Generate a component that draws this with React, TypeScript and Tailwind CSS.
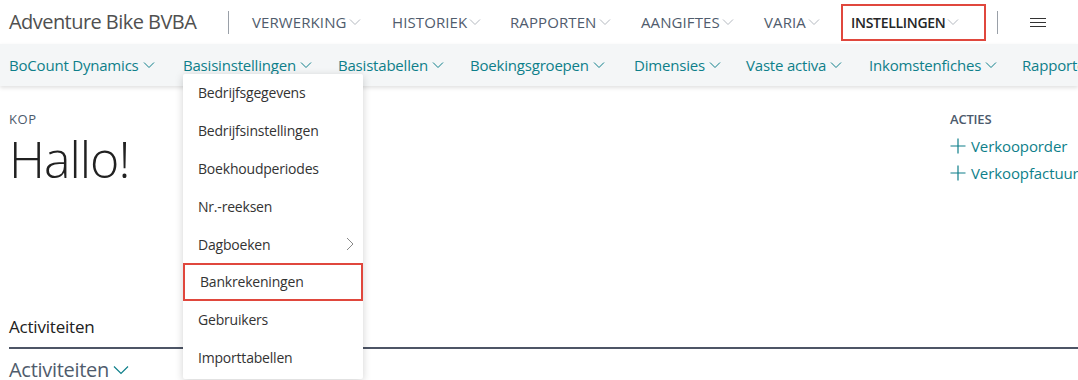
const font = { fontFamily: '"Open Sans", "Noto Sans", sans-serif' };

const topItems = [
  { label: 'VERWERKING', w: 'w-[140px]' },
  { label: 'HISTORIEK', w: 'w-[118px]' },
  { label: 'RAPPORTEN', w: 'w-[131px]' },
  { label: 'AANGIFTES', w: 'w-[123px]' },
  { label: 'VARIA', w: 'w-[77px]' },
];

const subItems = [
  { label: 'BoCount Dynamics', w: 'w-[174px]' },
  { label: 'Basisinstellingen', w: 'w-[155px]' },
  { label: 'Basistabellen', w: 'w-[132px]' },
  { label: 'Boekingsgroepen', w: 'w-[164px]' },
  { label: 'Dimensies', w: 'w-[112px]' },
  { label: 'Vaste activa', w: 'w-[123px]' },
  { label: 'Inkomstenfiches', w: 'w-[153px]' },
  { label: 'Rapporten', w: 'w-[100px]' },
];

const menuItems = [
  'Bedrijfsgegevens',
  'Bedrijfsinstellingen',
  'Boekhoudperiodes',
  'Nr.-reeksen',
  'Dagboeken',
  'Bankrekeningen',
  'Gebruikers',
  'Importtabellen',
];

function Chevron({ className }: { className?: string }) {
  return (
    <svg width="12" height="8" viewBox="0 0 12 8" className={className}>
      <polyline points="1,1.5 6,6.5 11,1.5" fill="none" stroke="currentColor" strokeWidth="1" />
    </svg>
  );
}

function Plus() {
  return (
    <svg width="16" height="16" viewBox="0 0 16 16" className="shrink-0">
      <path d="M8 0.5V15.5M0.5 8H15.5" stroke="#0e7f8a" strokeWidth="1.2" fill="none" />
    </svg>
  );
}

export default function App() {
  return (
    <div className="relative w-[1078px] h-[380px] overflow-hidden bg-white" style={font}>
      {/* Top bar */}
      <div className="flex items-center h-[44px] pl-[9px]">
        <div className="text-[20px] text-[#505050] w-[219px] whitespace-nowrap tracking-[-0.55px]">Adventure Bike BVBA</div>
        <div className="w-px h-[23px] bg-[#9aa0a8]" />
        <div className="flex items-center pl-[23px]">
          {topItems.map((it) => (
            <div key={it.label} className={`${it.w} flex items-center gap-[2px] text-[15px] text-[#505c6d] whitespace-nowrap tracking-[0.1px]`}>
              {it.label}
              <Chevron className="text-[#b4b9c0]" />
            </div>
          ))}
          <div className="flex items-center gap-[2px] w-[145px] h-[37px] pl-[8px] border-2 border-[#e0473d] text-[14px] font-semibold text-[#262626] whitespace-nowrap tracking-[-0.3px]">
            INSTELLINGEN
            <Chevron className="text-[#b4b9c0]" />
          </div>
          <div className="w-px h-[23px] bg-[#9aa0a8] ml-[11px]" />
          <div className="ml-[32px] flex flex-col gap-[3px]">
            <div className="w-[16px] h-px bg-[#333]" />
            <div className="w-[16px] h-px bg-[#333]" />
            <div className="w-[16px] h-px bg-[#333]" />
          </div>
        </div>
      </div>

      {/* Sub bar */}
      <div className="flex items-center h-[42px] pl-[9px] bg-[#f4f6f7] shadow-[0_2px_4px_rgba(0,0,0,0.12)] relative">
        {subItems.map((it) => (
          <div key={it.label} className={`${it.w} shrink-0 flex items-center gap-[4px] text-[15px] text-[#0e7f8a] whitespace-nowrap tracking-[-0.2px]`}>
            {it.label}
            <Chevron />
          </div>
        ))}
      </div>

      {/* Content */}
      <div className="flex pl-[9px] pt-[23px]">
        <div className="flex-1 flex flex-col">
          <div className="text-[13px] text-[#4c5a6c] tracking-[0.6px] leading-[20px]">KOP</div>
          <div className="text-[50px] font-light text-[#212121] leading-[52px] mt-[4px] mb-[4px] tracking-[-1px]">Hallo!</div>
        </div>
        <div className="w-[128px] flex flex-col">
          <div className="text-[13px] font-semibold text-[#4c5a6c] leading-[20px] tracking-[-0.2px]">ACTIES</div>
          <div className="flex items-center gap-[5px] text-[15px] text-[#0e7f8a] mt-[7px] whitespace-nowrap leading-[20px] tracking-[-0.1px]">
            <Plus />Verkooporder
          </div>
          <div className="flex items-center gap-[5px] text-[15px] text-[#0e7f8a] mt-[7px] whitespace-nowrap leading-[20px] tracking-[-0.1px]">
            <Plus />Verkoopfactuur
          </div>
        </div>
      </div>

      <div className="pl-[9px] mt-[126px]">
        <div className="text-[17px] text-[#212121] leading-[24px] pb-[8px] border-b-2 border-[#4d5566] tracking-[-0.2px]">Activiteiten</div>
        <div className="flex items-center gap-[4px] text-[20px] text-[#505c6d] leading-[28px] mt-[7px] tracking-[-0.3px]">
          Activiteiten
          <svg width="16" height="10" viewBox="0 0 16 10">
            <polyline points="1,1.5 8,8.5 15,1.5" fill="none" stroke="#0e7f8a" strokeWidth="1.2" />
          </svg>
        </div>
      </div>

      {/* Dropdown */}
      <div className="absolute left-[183px] top-[74px] w-[180px] h-[305px] bg-white shadow-[0_2px_8px_rgba(0,0,0,0.18)] rounded-[2px]">
        {menuItems.map((m) => (
          <div
            key={m}
            className={`h-[37.8px] flex items-center justify-between pl-[15px] pr-[9px] text-[14px] text-[#333] tracking-[-0.2px] ${m === 'Bankrekeningen' ? 'border-2 border-[#e0473d] pl-[13px]' : ''}`}
          >
            {m}
            {m === 'Dagboeken' && (
              <svg width="8" height="14" viewBox="0 0 8 14">
                <polyline points="1,1 7,7 1,13" fill="none" stroke="#888" strokeWidth="1" />
              </svg>
            )}
          </div>
        ))}
      </div>
    </div>
  );
}
